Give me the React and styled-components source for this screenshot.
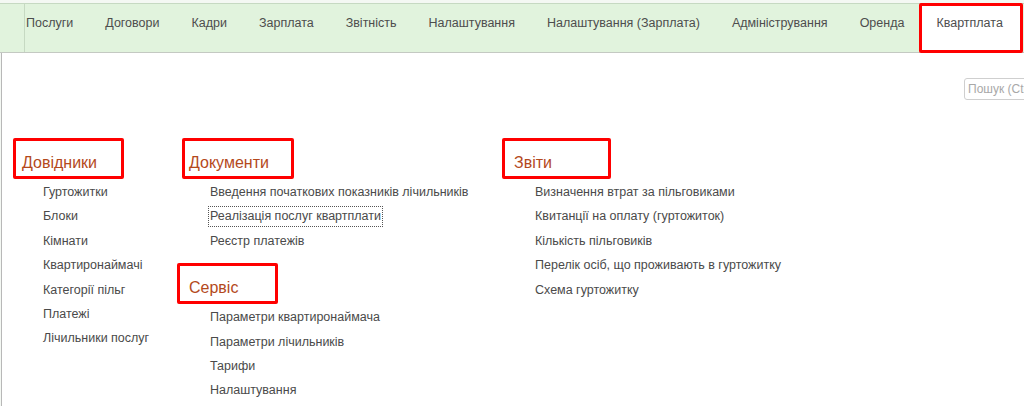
import styled, { createGlobalStyle } from 'styled-components'

const GlobalStyle = createGlobalStyle`
    html, body {
        margin: 0;
        padding: 0;
        background: #fff;
        overflow: hidden;
    }
    body {
        font-family: "Liberation Sans", Arial, sans-serif;
        font-size: 12.5px;
        color: #4a4a4a;
    }
`

const tabs = [
    'Послуги',
    'Договори',
    'Кадри',
    'Зарплата',
    'Звітність',
    'Налаштування',
    'Налаштування (Зарплата)',
    'Адміністрування',
    'Оренда',
    'Квартплата',
]

const columns = [
    {
        width: 167,
        groups: [
            {
                title: 'Довідники',
                mark: { left: -9, width: 111 },
                items: ['Гуртожитки', 'Блоки', 'Кімнати', 'Квартиронаймачі', 'Категорії пільг', 'Платежі', 'Лічильники послуг'],
            },
        ],
    },
    {
        width: 325,
        groups: [
            {
                title: 'Документи',
                mark: { left: -7, width: 112 },
                items: ['Введення початкових показників лічильників', 'Реалізація послуг квартплати', 'Реєстр платежів'],
                focused: 1,
            },
            {
                title: 'Сервіс',
                mark: { left: -12, width: 101 },
                items: ['Параметри квартиронаймача', 'Параметри лічильників', 'Тарифи', 'Налаштування'],
            },
        ],
    },
    {
        width: 300,
        groups: [
            {
                title: 'Звіти',
                mark: { left: -12, width: 109 },
                items: ['Визначення втрат за пільговиками', 'Квитанції на оплату (гуртожиток)', 'Кількість пільговиків', 'Перелік осіб, що проживають в гуртожитку', 'Схема гуртожитку'],
            },
        ],
    },
]

export default function App() {
    return (
        <Page>
            <GlobalStyle />
            <Nav>
                <NavSpacer />
                {tabs.map((t, i) => (
                    <Tab key={t} $first={i === 0} $active={i === tabs.length - 1}>{t}</Tab>
                ))}
            </Nav>
            <Content>
                <SearchRow>
                    <Search placeholder="Пошук (Ctrl+F)" />
                </SearchRow>
                <Columns>
                    {columns.map((col, ci) => (
                        <Column key={ci} $width={col.width}>
                            {col.groups.map((g) => (
                                <Group key={g.title}>
                                    <Heading $left={g.mark.left} $width={g.mark.width}>{g.title}</Heading>
                                    {g.items.map((it, ii) => (
                                        <Item key={it}>
                                            {g.focused === ii ? <Focused>{it}</Focused> : it}
                                        </Item>
                                    ))}
                                </Group>
                            ))}
                        </Column>
                    ))}
                </Columns>
            </Content>
        </Page>
    )
}

const Page = styled.div`
    width: 1024px;
    height: 406px;
    overflow: hidden;
    padding-top: 3px;
    box-sizing: border-box;
    background: #f4f8f3;
`

const Nav = styled.div`
    display: flex;
    height: 48px;
    background: #e1f3dd;
    border-top: 1px solid #c6d9c2;
    border-bottom: 1px solid #c4c9c2;
`

const NavSpacer = styled.div`
    width: 24px;
    flex: none;
    border-right: 1px solid #c6d9c2;
`

const Tab = styled.div`
    position: relative;
    flex: none;
    padding: 12px 16px 0 ${({ $first }) => ($first ? '1px' : '16px')};
    padding-right: ${({ $active }) => ($active ? '18px' : '16px')};
    line-height: 15px;
    font-size: 12.5px;
    color: #4d4d4d;
    white-space: nowrap;
    background: ${({ $active }) => ($active ? '#fff' : 'transparent')};
    margin-bottom: ${({ $active }) => ($active ? '-1px' : '0')};
    &::after {
        content: '';
        display: ${({ $active }) => ($active ? 'block' : 'none')};
        position: absolute;
        left: -1px;
        right: -2px;
        top: -1px;
        bottom: 0;
        border: 3px solid #f00;
        border-radius: 2px;
    }
`

const Content = styled.div`
    height: 100%;
    background: #fff;
    border-left: 1px solid #b8b8b8;
    margin-left: 1px;
    padding-left: 20px;
`

const SearchRow = styled.div`
    display: flex;
    justify-content: flex-end;
    padding-top: 25px;
    margin-right: -60px;
`

const Search = styled.input`
    width: 120px;
    height: 22px;
    box-sizing: border-box;
    border: 1px solid #cfcfcf;
    border-radius: 3px;
    padding: 0 3px;
    font-family: "Liberation Sans", Arial, sans-serif;
    font-size: 12px;
    outline: none;
    &::placeholder {
        color: #a8a8a8;
    }
`

const Columns = styled.div`
    display: flex;
    padding-top: 51px;
`

const Column = styled.div`
    width: ${({ $width }) => $width}px;
    flex: none;
`

const Group = styled.div`
    & + & {
        margin-top: 23px;
    }
`

const Heading = styled.div`
    position: relative;
    font-size: 16px;
    line-height: 24px;
    color: #b4491c;
    margin-bottom: 5px;
    &::after {
        content: '';
        position: absolute;
        left: ${({ $left }) => $left}px;
        width: ${({ $width }) => $width}px;
        top: -13px;
        height: 41px;
        box-sizing: border-box;
        border: 3px solid #f00;
        border-radius: 2px;
    }
`

const Item = styled.div`
    padding-left: 21px;
    line-height: 24.4px;
    font-size: 12.5px;
    color: #4a4a4a;
    white-space: nowrap;
`

const Focused = styled.span`
    display: inline-block;
    line-height: 19px;
    margin-left: -2px;
    padding: 0 1px;
    border: 1px dotted #555;
`
